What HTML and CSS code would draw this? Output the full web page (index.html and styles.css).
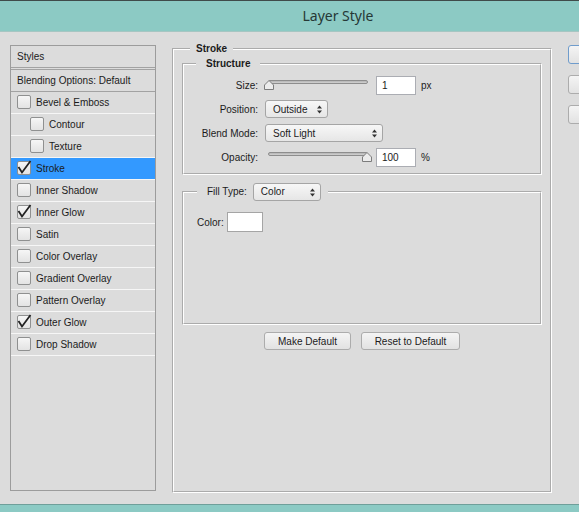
FILE: index.html
```html
<!DOCTYPE html>
<html lang="en">

<head>
  <meta charset="UTF-8">
  <title>Layer Style</title>
  <link rel="stylesheet" href="styles.css">
</head>

<body>
  <div class="dialog">
    <header class="titlebar">Layer Style</header>

    <div class="content">
      <aside class="styles-panel">
        <div class="panel-head">Styles</div>
        <div class="panel-blend">Blending Options: Default</div>
        <ul class="fx-list">
          <li><span class="check"></span>Bevel &amp; Emboss</li>
          <li class="sub"><span class="check"></span>Contour</li>
          <li class="sub"><span class="check"></span>Texture</li>
          <li class="active"><span class="check on"><svg viewBox="0 0 14 14"><path d="M1.5 6 L5 11.5 L13.5 0" /></svg></span>Stroke</li>
          <li><span class="check"></span>Inner Shadow</li>
          <li><span class="check on"><svg viewBox="0 0 14 14"><path d="M1.5 6 L5 11.5 L13.5 0" /></svg></span>Inner Glow</li>
          <li><span class="check"></span>Satin</li>
          <li><span class="check"></span>Color Overlay</li>
          <li><span class="check"></span>Gradient Overlay</li>
          <li><span class="check"></span>Pattern Overlay</li>
          <li><span class="check on"><svg viewBox="0 0 14 14"><path d="M1.5 6 L5 11.5 L13.5 0" /></svg></span>Outer Glow</li>
          <li><span class="check"></span>Drop Shadow</li>
        </ul>
      </aside>

      <fieldset class="group stroke-box">
        <legend>Stroke</legend>

        <fieldset class="group structure">
          <legend>Structure</legend>
          <div class="row">
            <label>Size:</label>
            <div class="slider">
              <div class="track"></div>
              <svg class="thumb" style="left: 0%" viewBox="0 0 10 10"><path d="M0.5 9.5 V5 L5 0.5 L9.5 5 V9.5 Z" /></svg>
            </div>
            <span class="num">1</span>
            <span class="unit">px</span>
          </div>
          <div class="row">
            <label>Position:</label>
            <div class="select sel-position">Outside<svg class="arrows" viewBox="0 0 5 9"><path d="M0 3.5 L2.5 0.5 L5 3.5 Z M0 5.5 L2.5 8.5 L5 5.5 Z" /></svg></div>
          </div>
          <div class="row">
            <label>Blend Mode:</label>
            <div class="select sel-blend">Soft Light<svg class="arrows" viewBox="0 0 5 9"><path d="M0 3.5 L2.5 0.5 L5 3.5 Z M0 5.5 L2.5 8.5 L5 5.5 Z" /></svg></div>
          </div>
          <div class="row">
            <label>Opacity:</label>
            <div class="slider">
              <div class="track"></div>
              <svg class="thumb" style="left: calc(100% - 10px)" viewBox="0 0 10 10"><path d="M0.5 9.5 V5 L5 0.5 L9.5 5 V9.5 Z" /></svg>
            </div>
            <span class="num">100</span>
            <span class="unit">%</span>
          </div>
        </fieldset>

        <fieldset class="group fill">
          <legend>
            <label>Fill Type:</label>
            <div class="select sel-fill">Color<svg class="arrows" viewBox="0 0 5 9"><path d="M0 3.5 L2.5 0.5 L5 3.5 Z M0 5.5 L2.5 8.5 L5 5.5 Z" /></svg></div>
          </legend>
          <div class="color-row">
            <label>Color:</label>
            <span class="swatch"></span>
          </div>
        </fieldset>

        <div class="btn-row">
          <button class="btn btn-make">Make Default</button>
          <button class="btn btn-reset">Reset to Default</button>
        </div>
      </fieldset>

      <div class="side-btns">
        <button class="btn side default"></button>
        <button class="btn side"></button>
        <button class="btn side"></button>
      </div>
    </div>

    <footer class="bottom"></footer>
  </div>
</body>

</html>
```

FILE: styles.css
```css
* {
  margin: 0;
  padding: 0;
  box-sizing: border-box;
}

body {
  width: 579px;
  height: 512px;
  overflow: hidden;
  background: #dcdcdc;
  font-family: "Liberation Sans", Arial, sans-serif;
  font-size: 10px;
  color: #1b1b1b;
}

.dialog {
  width: 676px;
  height: 512px;
  display: flex;
  flex-direction: column;
}

.titlebar {
  flex: none;
  height: 32px;
  background: #8ccac4;
  border-top: 1px solid #3f4b4a;
  border-bottom: 1px solid #a6c6c2;
  text-align: center;
  font-family: "Noto Sans", "Open Sans", sans-serif;
  font-size: 14px;
  line-height: 30px;
  color: #263836;
}

.content {
  flex: 1;
  display: flex;
  align-items: flex-start;
  padding-top: 10px;
}

.bottom {
  flex: none;
  height: 8px;
  background: #8ccac4;
  border-top: 1px solid #6f9f9a;
}

/* lista de estilos */
.styles-panel {
  margin: 3px 0 0 10px;
  width: 146px;
  height: 446px;
  border: 1px solid #9c9c9c;
}

.panel-head {
  height: 24px;
  line-height: 21px;
  padding-left: 6px;
  border-bottom: 3px double #a2a2a2;
}

.panel-blend {
  height: 22px;
  line-height: 21px;
  padding-left: 6px;
  border-bottom: 1px solid #a2a2a2;
}

.fx-list {
  list-style: none;
}

.fx-list > li {
  height: 22px;
  display: flex;
  align-items: center;
  gap: 5px;
  padding-left: 6px;
  border-bottom: 1px solid #f6f6f6;
}

.fx-list > li.sub {
  padding-left: 19px;
}

.fx-list > li.active {
  background: #3399ff;
}

.check {
  flex: none;
  position: relative;
  width: 14px;
  height: 14px;
  margin-top: -1px;
  border: 1px solid #8f9090;
  border-radius: 2px;
  background: linear-gradient(#f6f6f6, #e3e3e3);
}

.check > svg {
  position: absolute;
  left: -1px;
  top: -1px;
  width: 14px;
  height: 14px;
  overflow: visible;
}

.check > svg > path {
  fill: none;
  stroke: #222;
  stroke-width: 1.8;
}

/* grupos */
.group {
  border: 2px groove #ffffff;
}

.group > legend {
  line-height: 13px;
  font-weight: bold;
}

.stroke-box {
  margin-left: 16px;
  width: 380px;
  height: 451px;
  padding: 2px 8px 0;
}

.stroke-box > legend {
  margin-left: 8px;
  padding: 0 6px;
}

.structure {
  padding: 3px 0 4px;
}

.structure > legend {
  margin-left: 12px;
  padding: 0 10px;
}

.row {
  height: 24px;
  display: flex;
  align-items: center;
}

.row > label {
  width: 74px;
  margin-right: 7px;
  text-align: right;
}

.slider {
  position: relative;
  width: 108px;
  height: 10px;
  margin: 0 4px 0 -1px;
}

.track {
  margin: 0 4px;
  height: 4px;
  border: 1px solid #8d8d8d;
  border-radius: 2px;
  background: linear-gradient(#b4b4b4, #d2d2d2);
}

.thumb {
  position: absolute;
  top: 0;
  width: 10px;
  height: 10px;
}

.thumb > path {
  fill: #ececec;
  stroke: #7c7c7c;
  stroke-width: 1;
  stroke-linejoin: round;
}

.num {
  width: 40px;
  height: 19px;
  line-height: 17px;
  padding-left: 5px;
  border: 1px solid #abadb3;
  background: #ffffff;
}

.unit {
  margin-left: 5px;
}

.select {
  height: 18px;
  display: flex;
  align-items: center;
  justify-content: space-between;
  padding: 0 5px 0 7px;
  border: 1px solid #a5a5a5;
  border-radius: 3px;
  background: linear-gradient(#f7f7f7, #e6e6e6);
  font-weight: normal;
}

.arrows {
  width: 5px;
  height: 9px;
  fill: #333;
}

.sel-position {
  width: 63px;
}

.sel-blend {
  width: 118px;
}

.fill {
  margin-top: 8px;
  padding: 0 0 91px 13px;
}

.fill > legend {
  display: flex;
  align-items: center;
  gap: 6px;
  padding: 0 7px 0 10px;
  line-height: 18px;
  font-weight: normal;
}

.sel-fill {
  width: 68px;
}

.color-row {
  display: flex;
  align-items: center;
  gap: 3px;
  padding-top: 11px;
}

.swatch {
  width: 36px;
  height: 20px;
  border: 1px solid #a5a5a5;
  background: #ffffff;
}

.btn {
  height: 18px;
  border: 1px solid #acacac;
  border-radius: 3px;
  background: linear-gradient(#f4f4f4, #e2e2e2);
  font: inherit;
  color: inherit;
}

.btn-row {
  display: flex;
  justify-content: center;
  gap: 10px;
  margin-top: 7px;
}

.btn-make {
  width: 87px;
}

.btn-reset {
  width: 99px;
}

.side-btns {
  display: flex;
  flex-direction: column;
  gap: 11px;
  margin: 3px 0 0 16px;
}

.btn.side {
  width: 90px;
  height: 19px;
}

.btn.side.default {
  border-color: #6f9ccc;
}
```
